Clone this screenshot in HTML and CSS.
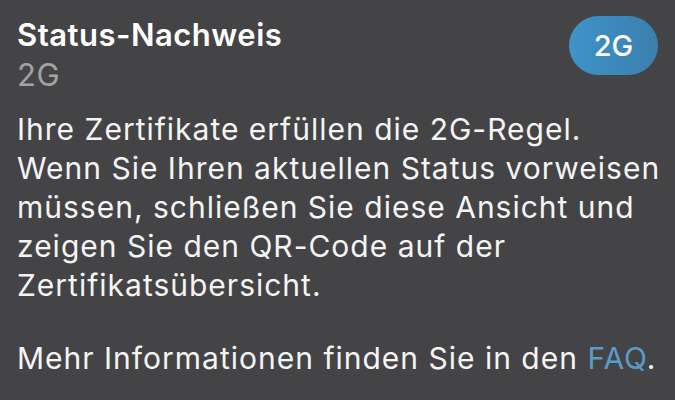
FILE: index.html
```html
<!DOCTYPE html>
<html lang="de">
<head>
<meta charset="utf-8">
<link rel="stylesheet" href="styles.css">
</head>
<body>
<div class="card">
  <div class="header">
    <div class="titles">
      <div class="title">Status-Nachweis</div>
      <div class="subtitle">2G</div>
    </div>
    <div class="badge">2G</div>
  </div>
  <p class="text">Ihre Zertifikate erfüllen die 2G-Regel.<br>Wenn Sie Ihren aktuellen Status vorweisen müssen, schließen Sie diese Ansicht und zeigen Sie den QR-Code auf der Zertifikatsübersicht.</p>
  <p class="text more">Mehr Informationen finden Sie in den <span class="link">FAQ</span>.</p>
</div>
</body>
</html>
```
FILE: styles.css
```css
html, body {
  margin: 0;
  padding: 0;
  background: #444446;
}
body {
  width: 675px;
  height: 400px;
  overflow: hidden;
  font-family: Inter, "Noto Sans", sans-serif;
  color: #f4f4f4;
}
.card {
  padding: 16px 17px 0 17px;
}
.header {
  display: flex;
  justify-content: space-between;
  align-items: flex-start;
}
.title {
  font-size: 31px;
  font-weight: 600;
  line-height: 38px;
  letter-spacing: 0.5px;
  color: #ffffff;
}
.subtitle {
  margin-top: 2px;
  font-size: 31px;
  line-height: 38px;
  letter-spacing: 0.5px;
  color: #a2a2a4;
}
.badge {
  width: 89px;
  height: 59px;
  border-radius: 30px;
  background: linear-gradient(90deg, #3f93c8 0%, #3a7fae 100%);
  color: #fff;
  font-size: 29px;
  font-weight: 500;
  display: flex;
  align-items: center;
  justify-content: center;
}
.text {
  margin: 16px -14px 0 0;
  font-size: 30px;
  line-height: 39px;
  letter-spacing: 1px;
}
.more {
  margin-top: 34px;
}
.link {
  color: #5a9bc9;
}
```
